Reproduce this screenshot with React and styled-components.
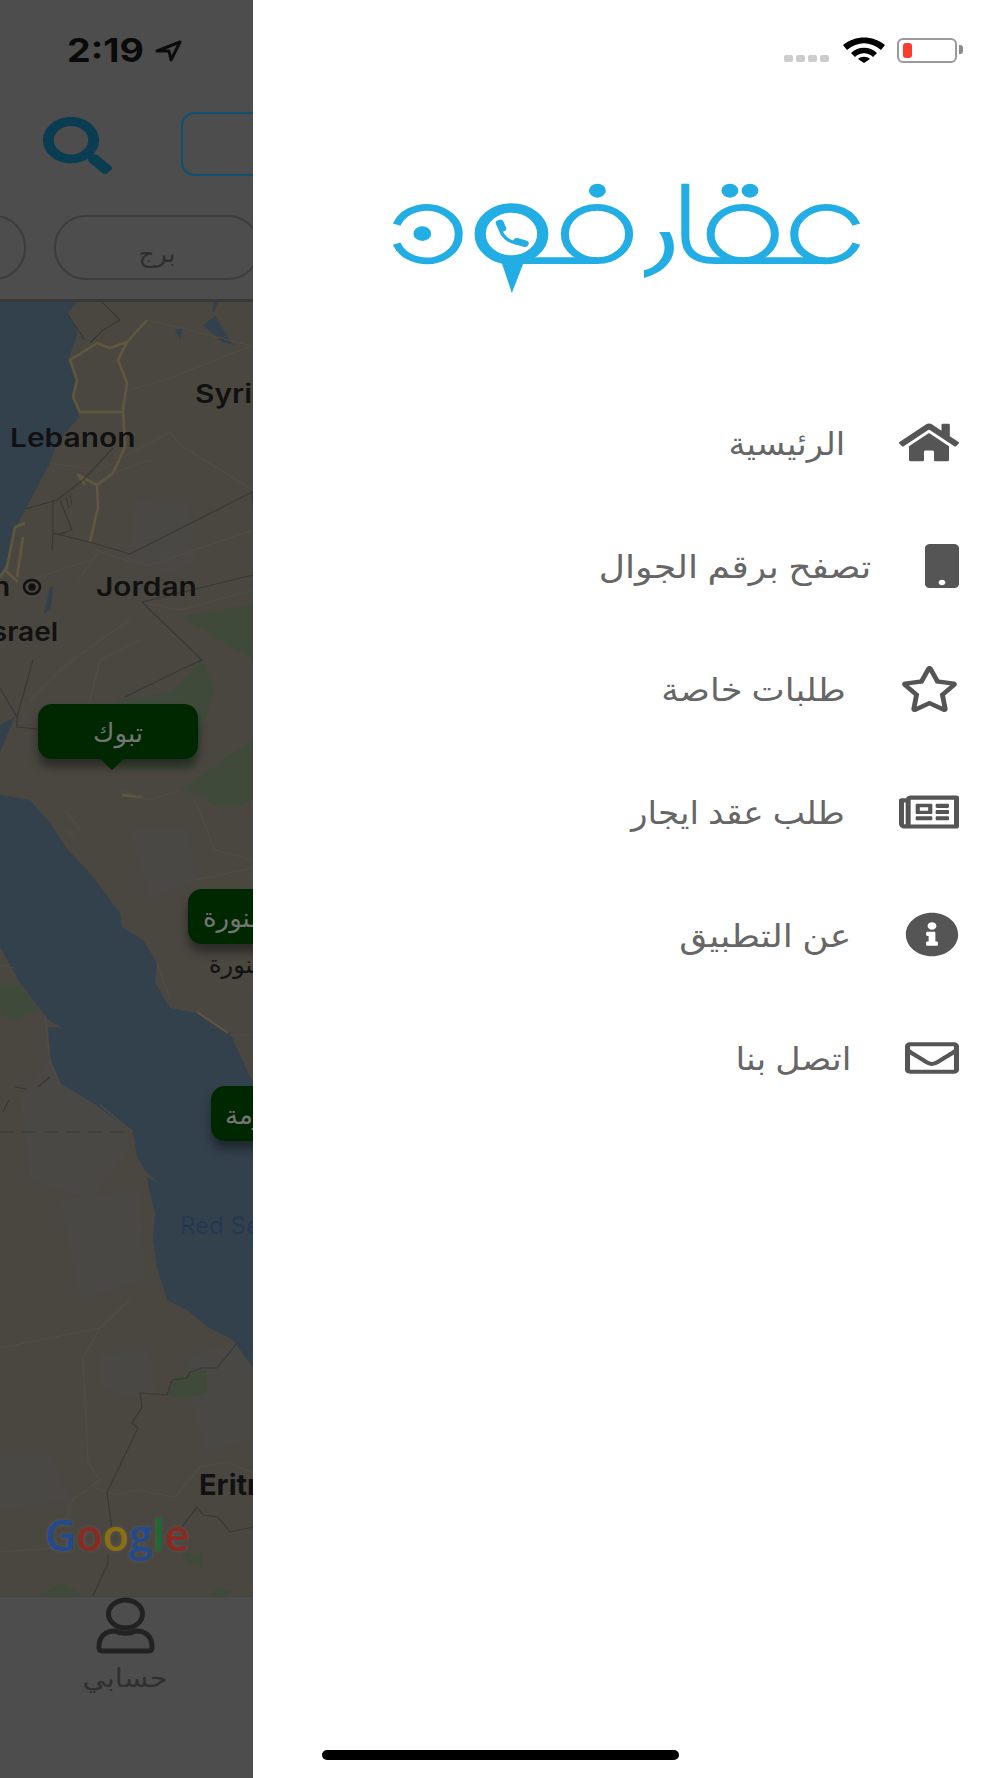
import styled, { createGlobalStyle } from 'styled-components';
import { FaHome, FaMobile, FaRegStar, FaRegNewspaper, FaInfoCircle, FaRegEnvelope, FaSearch } from 'react-icons/fa';

const GlobalStyle = createGlobalStyle`
  html, body {
    margin: 0;
    padding: 0;
    background: #fff;
  }
  #root {
    width: 1000px;
    height: 1778px;
  }
`;

const ARABIC = `"Noto Sans", "DejaVu Sans", sans-serif`;

const Screen = styled.div`
  display: flex;
  width: 1000px;
  height: 1778px;
  overflow: hidden;
  font-family: ${ARABIC};
`;

/* dimmed app behind the drawer */
const Behind = styled.div`
  width: 253px;
  flex: none;
  display: flex;
  flex-direction: column;
  overflow: hidden;
  background: #4d4d4d;
`;

const TopArea = styled.div`
  height: 299px;
  flex: none;
  border-bottom: 3px solid #393939;
  overflow: hidden;
`;

const ClockRow = styled.div`
  display: flex;
  align-items: center;
  gap: 21px;
  height: 25px;
  margin-top: 38px;
  padding-left: 67px;
`;

const Clock = styled.span`
  font-family: Inter, "Liberation Sans", sans-serif;
  font-weight: 700;
  font-size: 33px;
  line-height: 25px;
  color: #0a0a0a;
  transform: scaleX(1.14);
  transform-origin: left center;
`;

const SearchRow = styled.div`
  display: flex;
  align-items: center;
  gap: 69px;
  height: 64px;
  margin-top: 49px;
  padding-left: 43px;
  color: #0a3c52;
`;

const SearchGlyph = styled(FaSearch)`
  flex: none;
  width: 69px;
  height: 57px;
  margin-top: 2px;
`;

const SearchBox = styled.div`
  flex: none;
  width: 300px;
  height: 60px;
  border: 2px solid #0c5270;
  border-radius: 14px;
`;

const ChipRow = styled.div`
  display: flex;
  gap: 28px;
  margin-top: 39px;
  margin-left: -180px;
`;

const Chip = styled.div`
  flex: none;
  box-sizing: border-box;
  width: 206px;
  height: 65px;
  padding-top: 10px;
  border: 2px solid #3d3d3d;
  border-radius: 32px;
  font-size: 25px;
  line-height: 50px;
  text-align: center;
  color: #2e2e2e;
`;

const MapArea = styled.div`
  position: relative;
  flex: 1;
  overflow: hidden;
  background: #4a4741;
`;

const MapDrawing = styled.svg`
  display: block;
  width: 253px;
  height: 1294px;
`;

const MapLabel = styled.span`
  position: absolute;
  left: ${p => p.$x}px;
  top: ${p => p.$y - 302}px;
  font-family: Inter, "Liberation Sans", sans-serif;
  font-size: ${p => p.$size || 26}px;
  font-weight: ${p => p.$weight || 600};
  line-height: 1;
  white-space: nowrap;
  color: ${p => p.$color || '#111'};
  transform: scaleX(${p => p.$stretch || 1.15});
  transform-origin: left center;
`;

const PlaceLabel = styled.span`
  position: absolute;
  left: ${p => p.$x}px;
  top: ${p => p.$y - 302}px;
  font-size: 24px;
  line-height: 1;
  white-space: nowrap;
  color: #111;
`;

const PoiEye = styled.svg`
  position: absolute;
  left: 22px;
  top: 276px;
`;

const Marker = styled.div`
  position: absolute;
  left: ${p => p.$x}px;
  top: ${p => p.$y - 302}px;
  width: ${p => p.$w}px;
  height: 55px;
  padding-left: ${p => p.$pad || 0}px;
  box-sizing: border-box;
  display: flex;
  align-items: center;
  justify-content: ${p => (p.$pad ? 'flex-end' : 'center')};
  border-radius: 14px;
  background: #002800;
  box-shadow: 0 8px 10px rgba(0, 0, 0, 0.4);
  color: #757575;
  font-size: 26px;
  white-space: nowrap;

  &::after {
    content: '';
    display: ${p => (p.$tail ? 'block' : 'none')};
    position: absolute;
    left: 74px;
    bottom: -11px;
    margin-left: -12px;
    border-left: 12px solid transparent;
    border-right: 12px solid transparent;
    border-top: 11px solid #002800;
  }
`;

const GoogleMark = styled.div`
  position: absolute;
  left: 45px;
  top: ${1508 - 302}px;
  font-family: "Open Sans", Roboto, sans-serif;
  font-size: 43px;
  font-weight: 600;
  line-height: 54px;
  text-shadow: 0 0 4px rgba(110, 110, 110, 0.45);
`;

const GoogleLetter = styled.span`
  color: ${p => p.$color};
`;

const TabBar = styled.div`
  height: 181px;
  flex: none;
  display: flex;
  flex-direction: column;
  align-items: center;
  padding-right: 3px;
  border-top: 1px solid #434343;
  background: #4d4d4d;
`;

const TabLabel = styled.span`
  margin-top: 6px;
  font-size: 26px;
  line-height: 34px;
  color: #303030;
  transform: scaleX(1.12);
`;

/* drawer */
const Drawer = styled.div`
  flex: 1;
  display: flex;
  flex-direction: column;
  background: #fff;
`;

const DeviceStatus = styled.div`
  display: flex;
  justify-content: flex-end;
  align-items: flex-end;
  height: 25px;
  margin-top: 38px;
  padding-right: 37px;
`;

const Signal = styled.div`
  display: flex;
  gap: 3px;
  margin-right: 14px;
  margin-bottom: 1px;
`;

const SignalDot = styled.i`
  display: block;
  width: 9px;
  height: 7px;
  border-radius: 2px;
  background: #cccccc;
`;

const Battery = styled.div`
  position: relative;
  box-sizing: border-box;
  width: 60px;
  height: 25px;
  margin-left: 12px;
  margin-right: 6px;
  padding: 3px 4px;
  border: 2.5px solid #9a9a9a;
  border-radius: 6px;

  &::after {
    content: '';
    position: absolute;
    right: -8px;
    top: 5px;
    width: 4px;
    height: 9px;
    border-radius: 0 3px 3px 0;
    background: #8a8a8a;
  }
`;

const BatteryLevel = styled.div`
  width: 9px;
  height: 100%;
  border-radius: 3px;
  background: #ff3b30;
`;

const Logo = styled.svg`
  display: block;
  width: 467px;
  height: 110px;
  margin-top: 120px;
  margin-left: 140px;
`;

const Nav = styled.nav`
  display: flex;
  flex-direction: column;
  margin-top: 88px;
  padding-right: 41px;
`;

const NavRow = styled.a`
  display: flex;
  justify-content: flex-end;
  align-items: center;
  gap: ${p => p.$gap}px;
  height: 123px;
  color: #555;
`;

const NavText = styled.span`
  font-size: 32px;
  line-height: 40px;
  white-space: nowrap;
  color: #666;
  transform: scaleX(${p => p.$stretch});
  transform-origin: right center;
`;

const NavIcon = styled.svg`
  flex: none;
  width: ${p => p.$w}px;
  height: ${p => p.$h}px;
`;

const HomeBar = styled.div`
  width: 357px;
  height: 10px;
  margin-top: auto;
  margin-bottom: 18px;
  margin-left: 69px;
  border-radius: 5px;
  background: #000;
`;

const NAV_ITEMS = [
  { label: 'الرئيسية', Icon: FaHome, w: 60, h: 43, gap: 54, stretch: 1.06 },
  { label: 'تصفح برقم الجوال', Icon: FaMobile, w: 34, h: 44, gap: 54, stretch: 1.13 },
  { label: 'طلبات خاصة', Icon: FaRegStar, w: 59, h: 46, gap: 54, stretch: 1.1 },
  { label: 'طلب عقد ايجار', Icon: FaRegNewspaper, w: 60, h: 44, gap: 54, stretch: 1.07 },
  { label: 'عن التطبيق', Icon: FaInfoCircle, w: 54, h: 45, gap: 54, stretch: 1.13 },
  { label: 'اتصل بنا', Icon: FaRegEnvelope, w: 54, h: 42, gap: 54, stretch: 1.09 },
];

const GOOGLE = [
  ['G', '#234a8c'],
  ['o', '#8a2b23'],
  ['o', '#8c7010'],
  ['g', '#234a8c'],
  ['l', '#1b6a31'],
  ['e', '#8a2b23'],
];

const WATER = '#33414d';
const GREEN = '#404a3b';
const ROAD = '#60573f';
const FAINT = '#524d40';
const BORDER = '#383734';
const TERRAIN = '#494844';

const MapPicture = () => (
  <MapDrawing viewBox="0 302 253 1294" preserveAspectRatio="none">
    {/* terrain */}
    <g fill={TERRAIN}>
      <path d="M135 500 L190 505 L195 560 L170 575 L130 560 Z" />
      <path d="M70 1030 L110 1050 L130 1150 L90 1200 L30 1180 L20 1100 Z" />
      <path d="M100 1355 L150 1350 L155 1395 L120 1395 L100 1385 Z" />
      <path d="M0 1455 L50 1455 L70 1500 L0 1510 Z" />
      <path d="M190 1355 L250 1340 L250 1440 L205 1450 L190 1400 Z" />
      <path d="M60 1200 L140 1190 L145 1280 L80 1300 Z" />
      <path d="M130 830 L190 830 L195 880 L150 900 Z" />
    </g>
    {/* green */}
    <g fill={GREEN}>
      <path d="M182 617 L253 604 L253 660 Z" />
      <path d="M120 700 L170 692 L202 660 L215 690 L205 720 L195 770 L120 770 L105 720 Z" />
      <path d="M180 790 L253 740 L253 800 L215 800 Z" />
      <path d="M0 985 L20 985 L38 1010 L15 1020 L0 1015 Z" />
      <path d="M167 1395 L173 1380 L190 1373 L207 1370 L207 1393 L187 1398 Z" />
      <path d="M182 1553 L202 1553 L203 1567 L187 1562 Z" />
      <path d="M37 1596 L63 1582 L82 1596 Z" />
      <path d="M208 1596 L217 1587 L233 1592 L227 1596 Z" />
      <path d="M205 800 L250 800 L240 806 L215 806 Z" />
    </g>
    {/* water */}
    <g fill={WATER}>
      <path d="M0 302 L77 302 L68 313 L78 333 L68 360 L77 377 L72 393 L79 417 L57 443 L50 463 L25 510 L15 530 L5 567 L0 577 Z" />
      <path d="M0 795 L30 800 L50 823 L68 850 L90 873 L120 913 L122 927 L143 940 L157 963 L155 982 L170 1008 L197 1013 L230 1033 L250 1077 L253 1080 L253 1368 L233 1340 L208 1327 L187 1310 L167 1300 L157 1267 L153 1240 L155 1213 L150 1193 L147 1177 L159 1183 L146 1172 L137 1157 L133 1132 L93 1103 L60 1083 L50 1057 L48 1027 L63 1028 L48 1020 L43 1013 L20 983 L0 947 Z" />
      <path d="M15 717 L7 735 L0 752 L0 725 Z" />
      <path d="M50 587 L54 587 L50 610 L44 614 Z" />
      <path d="M214 302 L218 302 L214 312 L212 312 Z M203 325 L215 316 L233 345 L222 342 Z" />
      <path d="M175 330 L183 328 L180 340 Z" />
    </g>
    {/* main roads */}
    <g fill="none" stroke={ROAD} strokeWidth="2.6" strokeLinejoin="round">
      <path d="M147 320 L127 342 L118 360 L127 383 L123 410 L125 447 L113 473 L97 485 L98 507 L90 542" />
      <path d="M127 342 L110 348 L97 343 L70 360 L77 380 L73 397 L80 412 L122 412" />
      <path d="M97 485 L78 475 L85 485" />
      <path d="M25 523 L15 527 L7 567 L0 577 M23 537 L17 577 M5 570 L18 582" />
      <path d="M122 795 L142 797" strokeWidth="3" />
      <path d="M197 1012 L228 1033" strokeWidth="2" />
    </g>
    {/* minor roads */}
    <g fill="none" stroke={FAINT} strokeWidth="1.2">
      <path d="M0 1348 L100 1328 L130 1300 M100 1328 L83 1358 L88 1463 L100 1480 L70 1502 L68 1517" />
      <path d="M93 1487 L117 1495 L137 1490 L175 1497 L200 1467 L227 1462 L253 1473" />
      <path d="M0 1552 L70 1547" />
      <path d="M130 390 L165 380 L253 345 M147 320 L190 330 L247 345 L248 350" />
      <path d="M50 463 L100 470 L170 432 L180 445 L253 490 M113 473 L150 460" />
      <path d="M95 550 L125 560 L150 565 L253 530 M78 580 L100 550 M30 580 L90 560" />
      <path d="M142 602 L180 610 L253 590 M30 700 L60 670 L100 640 L130 620 M90 700 L100 660 L140 640" />
      <path d="M65 810 L80 830 M75 835 L65 830 M195 800 L215 850 L253 860 L253 880 M195 880 L253 868" />
      <path d="M157 963 L170 1000 M230 1035 L253 1035 M0 965 L15 968 M45 1015 L50 1060 L60 1085 M100 1105 L133 1132" />
      <path d="M180 790 L150 800 L120 790" />
    </g>
    {/* borders */}
    <g fill="none" stroke={BORDER} strokeWidth="1.1">
      <path d="M25 509 L57 500 L83 480 L113 448" />
      <path d="M53 500 L53 533 L93 543 L130 554 L252 492 L253 505" />
      <path d="M57 535 L72 530 L60 500 M53 533 L52 550 M70 495 L72 505 M66 497 L69 508" />
      <path d="M142 602 L253 575" />
      <path d="M142 602 L202 660 L180 670 L125 697" />
      <path d="M0 688 L17 717 M33 660 L17 717 L17 727 L38 729" />
      <path d="M100 300 L120 320 L103 330 L90 343 M68 315 L85 340" />
      <path d="M50 1077 L38 1087 M27 1089 L15 1087 M9 1100 L3 1112" />
      <path d="M0 1132 L133 1132" strokeDasharray="14 8" opacity="0.8" />
      <path d="M237 1343 L217 1368 L202 1368 L190 1372 L187 1378 L172 1380 L167 1395 L140 1393 L142 1407 L132 1423 L138 1428 L107 1492 L112 1530 M108 1555 L108 1563 L93 1596" />
      <path d="M182 1527 L197 1507 L203 1515 L218 1517 L230 1532 L253 1527" />
    </g>
  </MapDrawing>
);

const LogoPicture = () => (
  <Logo viewBox="57 490 1163 330" preserveAspectRatio="none">
    <g fill="none" stroke="#22ade4" strokeWidth="20">
      <path d="M66 615 A80 80 0 1 1 66 672" />
      <circle cx="352" cy="643" r="78" strokeWidth="28" />
      <circle cx="565" cy="643" r="80" />
      <circle cx="928" cy="643" r="80" />
      <path d="M1211 615 A80 80 0 1 0 1211 672" />
      <path d="M380 723 H565" />
      <path d="M785 492 V650 Q785 723 860 723 H1135" />
      <path d="M323 612 C323 650 345 672 383 672" strokeWidth="9" />
      <path d="M323 610 L329 626 M366 665 L385 672" strokeWidth="20" strokeLinecap="round" />
    </g>
    <g fill="#22ade4">
      <circle cx="130" cy="642" r="22" />
      <circle cx="566" cy="513" r="21" />
      <circle cx="896" cy="513" r="21" />
      <circle cx="946" cy="513" r="21" />
      <path d="M328 730 L382 730 L353 820 Z" />
      <path d="M720 637 L746 637 C770 690 755 750 682 775 L682 752 C725 740 750 690 720 637 Z" />
    </g>
  </Logo>
);

const App = () => (
  <>
    <GlobalStyle />
    <Screen>
      <Behind>
        <TopArea>
          <ClockRow>
            <Clock>2:19</Clock>
            <svg width="27" height="22" viewBox="0 0 27 22" fill="none" stroke="#0c0c0c" strokeWidth="3" strokeLinejoin="round">
              <path d="M2 11 L25 2 L16 20 L14 11 Z" />
            </svg>
          </ClockRow>
          <SearchRow>
            <SearchGlyph preserveAspectRatio="none" />
            <SearchBox />
          </SearchRow>
          <ChipRow>
            <Chip />
            <Chip dir="rtl">برج</Chip>
          </ChipRow>
        </TopArea>
        <MapArea>
          <MapPicture />
          <MapLabel $x={195} $y={381}>Syria</MapLabel>
          <MapLabel $x={10} $y={425}>Lebanon</MapLabel>
          <MapLabel $x={96} $y={574}>Jordan</MapLabel>
          <MapLabel $x={-8} $y={574}>n</MapLabel>
          <PoiEye width="20" height="18" viewBox="0 0 20 18" fill="none" stroke="#111" strokeWidth="2.5">
            <ellipse cx="10" cy="9" rx="8" ry="7" />
            <circle cx="10" cy="9" r="2.5" fill="#111" />
          </PoiEye>
          <MapLabel $x={-16} $y={619} $stretch={1.08}>Israel</MapLabel>
          <MapLabel $x={180} $y={1214} $size={24} $stretch={1} $weight={400} $color="#263850">Red Sea</MapLabel>
          <MapLabel $x={199} $y={1470} $size={29} $stretch={1} $weight={700}>Eritrea</MapLabel>
          <Marker $x={38} $y={704} $w={160} $tail dir="rtl">تبوك</Marker>
          <Marker $x={188} $y={889} $w={260} $pad={15} dir="rtl">المدينة المنورة</Marker>
          <PlaceLabel $x={209} $y={952} dir="rtl">المدينة المنورة</PlaceLabel>
          <Marker $x={211} $y={1086} $w={190} $pad={14} dir="rtl">مكة المكرمة</Marker>
          <GoogleMark>
            {GOOGLE.map(([letter, color], i) => (
              <GoogleLetter key={i} $color={color}>{letter}</GoogleLetter>
            ))}
          </GoogleMark>
        </MapArea>
        <TabBar>
          <svg width="59" height="57" viewBox="0 0 59 57" fill="none" stroke="#222" strokeWidth="5">
            <ellipse cx="29.5" cy="17" rx="17" ry="14" />
            <path d="M3 50 C3 38 11 34 19 34 C25 37 34 37 40 34 C48 34 56 38 56 50 C56 53 55 54 53 54 H6 C4 54 3 53 3 50 Z" strokeLinejoin="round" />
          </svg>
          <TabLabel dir="rtl">حسابي</TabLabel>
        </TabBar>
      </Behind>

      <Drawer>
        <DeviceStatus>
          <Signal>
            {[0, 1, 2, 3].map(i => <SignalDot key={i} />)}
          </Signal>
          <svg width="42" height="26" viewBox="0 0 42 26">
            <path d="M0 8 C12 -2 30 -2 42 8 L38 13 C27 4 15 4 4 13 Z" fill="#000" />
            <path d="M8 16 C15 9 27 9 34 16 L30 20 C25 15 17 15 12 20 Z" fill="#000" />
            <path d="M15 22 C18 19 24 19 27 22 L21 26 Z" fill="#000" />
          </svg>
          <Battery>
            <BatteryLevel />
          </Battery>
        </DeviceStatus>

        <LogoPicture />

        <Nav>
          {NAV_ITEMS.map(({ label, Icon, w, h, gap, stretch }) => (
            <NavRow key={label} $gap={gap}>
              <NavText dir="rtl" $stretch={stretch}>{label}</NavText>
              <NavIcon as={Icon} $w={w} $h={h} preserveAspectRatio="none" />
            </NavRow>
          ))}
        </Nav>

        <HomeBar />
      </Drawer>
    </Screen>
  </>
);

export default App;
